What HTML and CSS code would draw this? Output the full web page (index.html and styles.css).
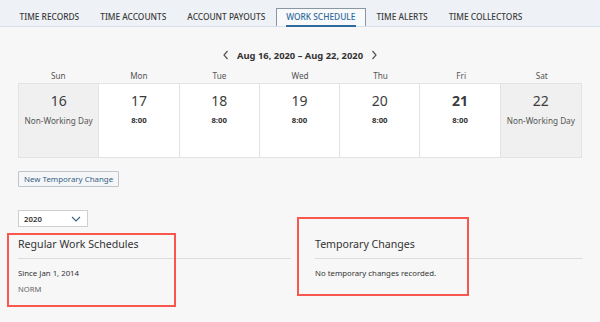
FILE: index.html
```html
<!DOCTYPE html>
<html lang="en">
<head>
    <meta charset="UTF-8">
    <title>Work Schedule</title>
    <link rel="stylesheet" href="styles.css">
</head>
<body>
    <div class="Tabs">
        <div class="tab">TIME RECORDS</div>
        <div class="tab">TIME ACCOUNTS</div>
        <div class="tab">ACCOUNT PAYOUTS</div>
        <div class="tab active">WORK SCHEDULE</div>
        <div class="tab">TIME ALERTS</div>
        <div class="tab">TIME COLLECTORS</div>
    </div>

    <div class="Page">
        <div class="WeekNav">
            <svg class="chev" width="8" height="10" viewBox="0 0 8 10"><path d="M5.5 1 L2 5 L5.5 9" fill="none" stroke="#555" stroke-width="1.2"/></svg>
            <span>Aug 16, 2020 &ndash; Aug 22, 2020</span>
            <svg class="chev" width="8" height="10" viewBox="0 0 8 10"><path d="M2.5 1 L6 5 L2.5 9" fill="none" stroke="#555" stroke-width="1.2"/></svg>
        </div>

        <div class="DayNames">
            <div>Sun</div><div>Mon</div><div>Tue</div><div>Wed</div><div>Thu</div><div>Fri</div><div>Sat</div>
        </div>
        <div class="Week">
            <div class="day off"><div class="num">16</div><div class="off-txt">Non-Working Day</div></div>
            <div class="day"><div class="num">17</div><div class="hrs">8:00</div></div>
            <div class="day"><div class="num">18</div><div class="hrs">8:00</div></div>
            <div class="day"><div class="num">19</div><div class="hrs">8:00</div></div>
            <div class="day"><div class="num">20</div><div class="hrs">8:00</div></div>
            <div class="day"><div class="num today">21</div><div class="hrs">8:00</div></div>
            <div class="day off"><div class="num">22</div><div class="off-txt">Non-Working Day</div></div>
        </div>

        <button class="NewBtn">New Temporary Change</button>

        <div class="YearSelect">
            <span>2020</span>
            <svg width="10" height="6" viewBox="0 0 10 6"><path d="M1 1 L5 5 L9 1" fill="none" stroke="#346187" stroke-width="1.1"/></svg>
        </div>

        <div class="Lists">
            <div class="list">
                <h3>Regular Work Schedules</h3>
                <p class="since">Since Jan 1, 2014</p>
                <p class="code">NORM</p>
            </div>
            <div class="list">
                <h3>Temporary Changes</h3>
                <p class="since">No temporary changes recorded.</p>
            </div>
        </div>
    </div>

    <div class="mark mark-left"></div>
    <div class="mark mark-right"></div>
</body>
</html>
```

FILE: styles.css
```css
*{
    box-sizing: border-box;
    margin: 0;
    padding: 0;
}
body{
    background-color: #f7f7f7;
    font-family: "Noto Sans", "Open Sans", sans-serif;
    color: #333;
    width: 600px;
    height: 322px;
    overflow: hidden;
    position: relative;
}
.Tabs{
    display: flex;
    align-items: flex-end;
    height: 27px;
    padding-left: 9px;
    background-color: #eef1f5;
    border-bottom: 1px solid #d5e0ea;
}
.tab{
    font-size: 8.35px;
    font-weight: 500;
    color: #3b3b3b;
    padding: 0 9.5px;
    height: 18px;
    line-height: 16px;
    border: 1px solid transparent;
    border-bottom: none;
}
.tab.active{
    color: #2f6a9e;
    border-color: #8a97a3;
    background-color: #f7f9fb;
    position: relative;
}
.tab.active::after{
    content: "";
    position: absolute;
    left: 9px;
    right: 9px;
    bottom: -1px;
    height: 2px;
    background-color: #2f6a9e;
}
.Page{
    padding: 0 18px;
}
.WeekNav{
    display: flex;
    justify-content: center;
    align-items: center;
    gap: 5px;
    height: 16px;
    margin-top: 20px;
    font-size: 9.4px;
    font-weight: 700;
    color: #333;
}
.chev{
    margin: 0 2px;
}
.DayNames{
    display: grid;
    grid-template-columns: repeat(7, 1fr);
    margin-top: 6px;
    height: 14px;
    font-size: 8.2px;
    color: #555;
    text-align: center;
    line-height: 14px;
}
.Week{
    display: grid;
    grid-template-columns: repeat(7, 1fr);
    height: 75px;
    border: 1px solid #e3e3e3;
    background-color: #fff;
}
.day{
    border-right: 1px solid #e3e3e3;
    text-align: center;
    padding-top: 8px;
}
.day:last-child{
    border-right: none;
}
.day.off{
    background-color: #f0f0f0;
}
.num{
    font-size: 14px;
    line-height: 18px;
    color: #3c3c3c;
}
.num.today{
    font-weight: 700;
}
.hrs{
    margin-top: 5px;
    font-size: 7.8px;
    font-weight: 700;
    color: #333;
}
.off-txt{
    margin-top: 5px;
    font-size: 8.2px;
    color: #555;
}
.NewBtn{
    display: block;
    margin-top: 13px;
    height: 16px;
    padding: 0 5px;
    font-family: inherit;
    font-size: 7.9px;
    color: #346187;
    background-color: #f5f6f7;
    border: 1px solid #bfc4c9;
    border-radius: 1px;
}
.YearSelect{
    display: flex;
    justify-content: space-between;
    align-items: center;
    margin-top: 23px;
    width: 70px;
    height: 17px;
    padding: 0 6px 0 5px;
    background-color: #fff;
    border: 1px solid #cfcfcf;
    font-size: 7.8px;
    font-weight: 600;
    color: #333;
}
.Lists{
    display: grid;
    grid-template-columns: 273px 268px;
    gap: 24px;
    margin-top: 9px;
}
.list h3{
    font-size: 10.6px;
    font-weight: 400;
    line-height: 16px;
    color: #333;
    padding-bottom: 6px;
    border-bottom: 1px solid #dcdcdc;
}
.since{
    margin-top: 9px;
    font-size: 7.8px;
    color: #333;
}
.code{
    margin-top: 6px;
    font-size: 7.6px;
    color: #666;
}
.mark{
    position: absolute;
    border: 2px solid #f9574e;
}
.mark-left{
    left: 7px;
    top: 233px;
    width: 169px;
    height: 74px;
}
.mark-right{
    left: 297px;
    top: 217px;
    width: 172px;
    height: 79px;
}
```
